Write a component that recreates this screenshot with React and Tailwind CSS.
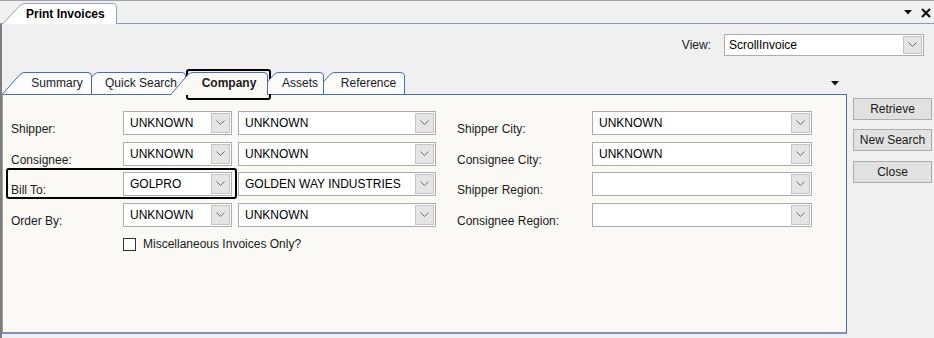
import React from 'react';

const BLUE = '#4a6cb0';

function Chevron() {
  return (
    <svg width="9" height="6" viewBox="0 0 9 6" className="block">
      <polyline points="0.5,0.5 4.5,4.5 8.5,0.5" fill="none" stroke="#6b6b6b" strokeWidth="1" />
    </svg>
  );
}

function Combo({ value, w }) {
  return (
    <div className={`${w} h-[24px] bg-white border border-[#acacac] flex items-center`}>
      <span className="flex-1 pl-[6px] truncate leading-[14px] text-black">{value}</span>
      <div className="w-[19px] h-[20px] mr-[1px] bg-[#e5e5e5] border border-[#c4c4c4] flex items-center justify-center">
        <Chevron />
      </div>
    </div>
  );
}

// slanted windows-style tab
function Tab({ label, w, slant = 20, z, selected, bold, ml = '' }) {
  const h = selected ? 23 : 22;
  const d = `M0.5,${h} L${slant - 2},2.5 Q${slant},0.5 ${slant + 3},0.5 L${w - 4},0.5 Q${w - 0.5},0.5 ${w - 0.5},4 L${w - 0.5},${h}`;
  return (
    <div className={`relative ${z} ${ml} ${selected ? 'h-[23px] mb-[-1px]' : 'h-[22px]'}`} style={{ width: w }}>
      <svg width={w} height={h} className="absolute inset-0">
        <path d={d} fill={selected ? '#faf9f6' : '#fcfcfc'} stroke={BLUE} strokeWidth="1" />
      </svg>
      <div className="relative h-[22px] flex items-center justify-center" style={{ paddingLeft: slant }}>
        <span className={`leading-[14px] text-[#1a1a1a] ${bold ? 'font-bold' : ''}`}>{label}</span>
      </div>
    </div>
  );
}

function Row({ label, a, b, rlabel, rvalue, mt }) {
  return (
    <div className={`flex items-end h-[24px] ${mt}`}>
      <div className="w-[112px] leading-[14px] mb-[-1px] text-[#1a1a1a]">{label}</div>
      <Combo value={a} w="w-[109px]" />
      <div className="w-[6px]" />
      <Combo value={b} w="w-[198px]" />
      <div className="w-[21px]" />
      <div className="w-[135px] leading-[14px] mb-[-1px] text-[#1a1a1a]">{rlabel}</div>
      <Combo value={rvalue} w="w-[220px]" />
    </div>
  );
}

function Btn({ children, mt }) {
  return (
    <div className={`w-[79px] h-[22px] ${mt} bg-[#e1e1e1] border border-[#adadad] flex items-center justify-center leading-[14px] text-[#1a1a1a]`}>
      {children}
    </div>
  );
}

export default function App() {
  return (
    <div className="relative w-[934px] h-[338px] overflow-hidden bg-[#f0f0f0] font-['Liberation_Sans',Arial,sans-serif] text-[12px]">
      {/* document tab bar */}
      <div className="relative h-[24px] border-t border-[#a3a3a3] border-b border-b-[#8e9ab2] flex items-end">
        <div className="relative ml-[2px] w-[115px] h-[21px] mb-[-1px]">
          <svg width="115" height="21" className="absolute inset-0">
            <path d="M0.5,21 L18,2.5 Q20,0.5 23,0.5 L111,0.5 Q114.5,0.5 114.5,4 L114.5,21" fill="#ffffff" stroke="#97a3bb" />
          </svg>
          <div className="relative h-[21px] flex items-center pl-[24px] pt-[1px]">
            <span className="font-bold leading-[14px] text-black">Print Invoices</span>
          </div>
        </div>
        <div className="ml-auto mr-[3px] self-center flex items-center gap-[9px] pt-[1px]">
          <svg width="8" height="5" viewBox="0 0 8 5"><polygon points="0,0 8,0 4,4.5" fill="#111" /></svg>
          <svg width="10" height="10" viewBox="0 0 10 10">
            <path d="M1,1 L9,9 M9,1 L1,9" stroke="#111" strokeWidth="2.2" />
          </svg>
        </div>
      </div>

      {/* main area */}
      <div className="h-[314px] border-l-2 border-[#7c7c7c] flex flex-col">
        <div className="h-[32px] flex items-end justify-end pr-[10px]">
          <span className="mr-[13px] leading-[14px] mb-[4px] text-[#1a1a1a]">View:</span>
          <div className="w-[200px] h-[22px] bg-white border border-[#acacac] flex items-center">
            <span className="flex-1 pl-[4px] leading-[14px] text-black">ScrollInvoice</span>
            <div className="w-[19px] h-[18px] mr-[1px] bg-[#e5e5e5] border border-[#c4c4c4] flex items-center justify-center">
              <Chevron />
            </div>
          </div>
        </div>

        <div className="flex">
          <div className="w-[845px] flex flex-col">
            {/* tab strip */}
            <div className="relative z-10 h-[38px] flex items-end">
              <Tab label="Summary" w={90} z="z-[5]" />
              <Tab label="Quick Search" w={110} z="z-[4]" ml="ml-[-16px]" />
              <Tab label="Company" w={98} z="z-[6]" ml="ml-[-16px]" selected bold />
              <Tab label="Assets" w={68} z="z-[3]" ml="ml-[-12px]" />
              <Tab label="Reference" w={93} z="z-[2]" ml="ml-[-12px]" />
              <svg width="8" height="5" viewBox="0 0 8 5" className="ml-auto mr-[8px] mb-[8px]">
                <polygon points="0,0 8,0 4,4.5" fill="#111" />
              </svg>
            </div>

            {/* tab panel */}
            <div className="h-[240px] bg-[#faf9f6] border-t border-r border-[#4a6cb0] border-l border-l-[#a0a0a0] border-b-2 border-b-[#7b90c6] pt-[16px] pl-[8px]">
              <Row label="Shipper:" a="UNKNOWN" b="UNKNOWN" rlabel="Shipper City:" rvalue="UNKNOWN" />
              <Row label="Consignee:" a="UNKNOWN" b="UNKNOWN" rlabel="Consignee City:" rvalue="UNKNOWN" mt="mt-[7px]" />
              <Row label="Bill To:" a="GOLPRO" b="GOLDEN WAY INDUSTRIES" rlabel="Shipper Region:" rvalue="" mt="mt-[6px]" />
              <Row label="Order By:" a="UNKNOWN" b="UNKNOWN" rlabel="Consignee Region:" rvalue="" mt="mt-[7px]" />
              <div className="flex items-center mt-[10px] ml-[112px]">
                <div className="w-[13px] h-[13px] bg-white border border-[#333333]" />
                <span className="ml-[7px] leading-[14px] text-[#1a1a1a]">Miscellaneous Invoices Only?</span>
              </div>
            </div>
          </div>

          {/* action buttons */}
          <div className="ml-[6px] flex flex-col">
            <Btn mt="mt-[42px]">Retrieve</Btn>
            <Btn mt="mt-[9px]">New Search</Btn>
            <Btn mt="mt-[10px]">Close</Btn>
          </div>
        </div>
      </div>

      {/* annotation highlights */}
      <div className="absolute left-[199px] top-[74px] w-[64px] h-[17px] border border-dotted border-[#222]" />
      <div className="absolute left-[186px] top-[69px] w-[85px] h-[31px] border-[2.5px] border-black rounded-[3px]" />
      <div className="absolute left-[6px] top-[168px] w-[231px] h-[31px] border-2 border-black rounded-[3px]" />
    </div>
  );
}
